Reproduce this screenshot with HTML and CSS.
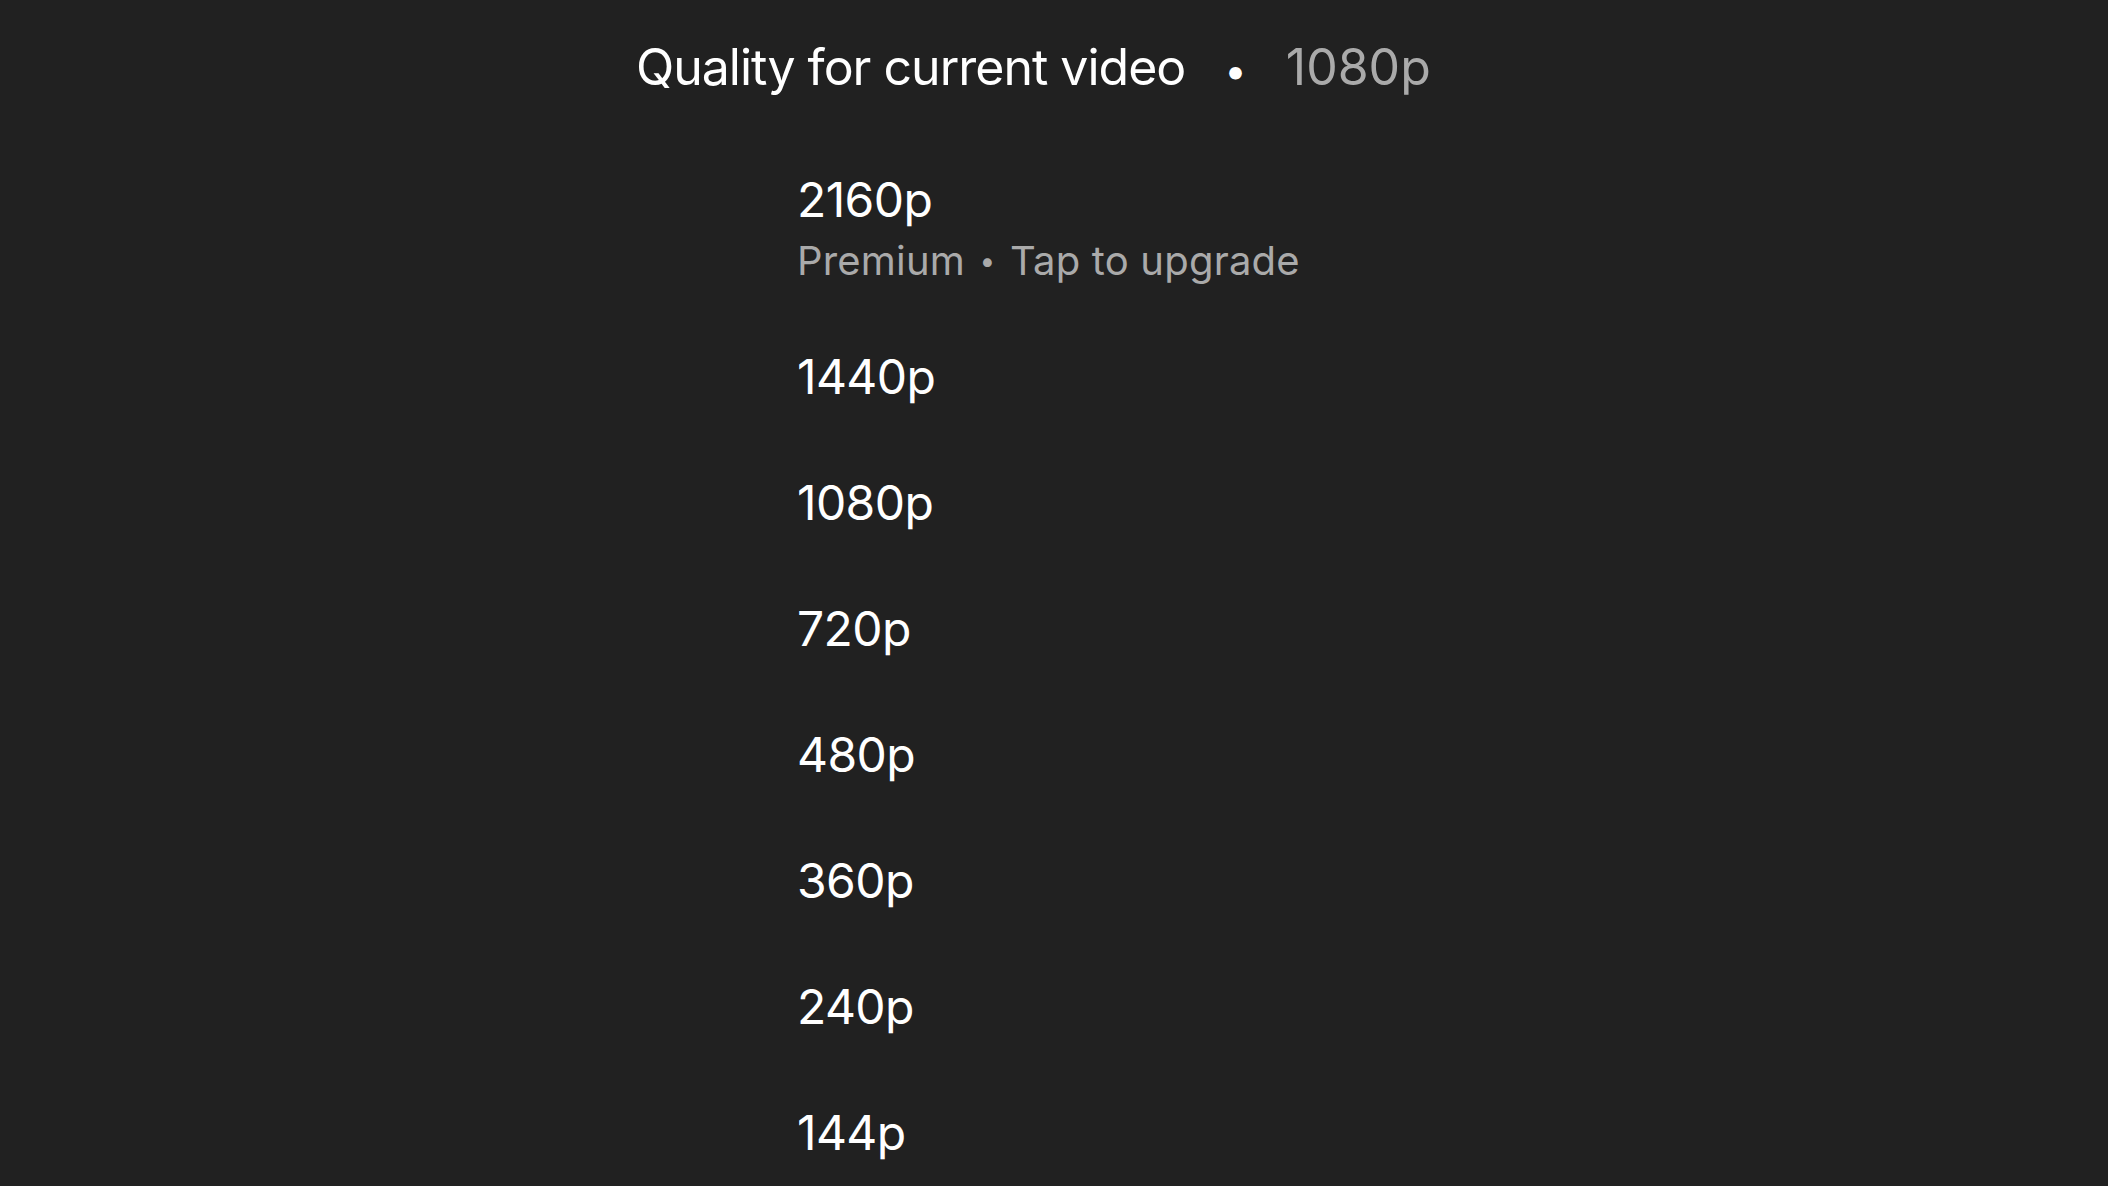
FILE: index.html
```html
<!DOCTYPE html>
<html lang="en">
<head>
    <meta charset="UTF-8">
    <meta name="viewport" content="width=device-width, initial-scale=1.0">
    <title>Quality for current video</title>
    <link rel="stylesheet" href="styles.css">
</head>
<body>
    <div class="sheet">
        <div class="header">
            <span class="header-title">Quality for current video</span>
            <span class="header-dot">•</span>
            <span class="header-value">1080p</span>
        </div>
        <ul class="options">
            <li class="option has-sub">
                <div class="option-label">2160p</div>
                <div class="option-sub">Premium <span class="sub-dot">•</span> Tap to upgrade</div>
            </li>
            <li class="option"><div class="option-label">1440p</div></li>
            <li class="option"><div class="option-label">1080p</div></li>
            <li class="option"><div class="option-label">720p</div></li>
            <li class="option"><div class="option-label">480p</div></li>
            <li class="option"><div class="option-label">360p</div></li>
            <li class="option"><div class="option-label">240p</div></li>
            <li class="option"><div class="option-label">144p</div></li>
        </ul>
    </div>
</body>
</html>
```

FILE: styles.css
```css
html, body {
    margin: 0;
    height: 100%;
    overflow: hidden;
}
body {
    background-color: #212121;
    color: #ffffff;
    font-family: Inter, "Noto Sans", sans-serif;
}
.sheet {
    padding-top: 37px;
}
.header {
    display: flex;
    align-items: baseline;
    gap: 39px;
    padding-left: 636px;
    font-size: 50px;
    line-height: 60px;
}
.header-title {
    letter-spacing: -1px;
}
.header-dot {
    font-size: 40px;
}
.header-value {
    color: #aaaaaa;
}
.options {
    list-style: none;
    margin: 0;
    padding: 36px 0 0 797px;
}
.option {
    padding: 34px 0;
}
.option.has-sub {
    padding-bottom: 31px;
}
.option-label {
    font-size: 48px;
    line-height: 58px;
    letter-spacing: -0.6px;
}
.option-sub {
    margin-top: 10px;
    font-size: 40px;
    line-height: 44px;
    letter-spacing: 0.2px;
    color: #aaaaaa;
}
.sub-dot {
    font-size: 28px;
    vertical-align: 4px;
    margin: 0 3px;
}
```
